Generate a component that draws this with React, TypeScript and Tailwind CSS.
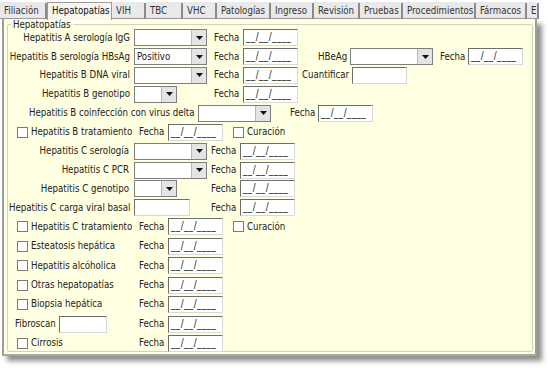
import React from 'react'

const font = { fontFamily: '"DejaVu Sans Condensed", "DejaVu Sans", Verdana, sans-serif' }

const tabs = [
  { label: 'Filiación', w: 'w-[47px]' },
  { label: 'Hepatopatías', w: 'w-[65px]', active: true },
  { label: 'VIH', w: 'w-[34px]' },
  { label: 'TBC', w: 'w-[37px]' },
  { label: 'VHC', w: 'w-[34px]' },
  { label: 'Patologías', w: 'w-[54px]' },
  { label: 'Ingreso', w: 'w-[43px]' },
  { label: 'Revisión', w: 'w-[46px]' },
  { label: 'Pruebas', w: 'w-[43px]' },
  { label: 'Procedimientos', w: 'w-[73px]' },
  { label: 'Fármacos', w: 'w-[51px]' },
  { label: 'E', w: 'w-[12px]' },
]

function Select({ value = '', small = false, wide = false }: { value?: string; small?: boolean; wide?: boolean }) {
  const w = small ? 'w-[43px]' : wide ? 'w-[83px]' : 'w-[73px]'
  return (
    <div className={`${w} h-[17px] flex border border-[#7f7f7f] bg-white shrink-0`}>
      <div className="flex-1 pl-[2px] leading-[15px] truncate">{value}</div>
      <div className="w-[15px] h-[15px] bg-[#e4e4e4] border-l border-[#b8b8b8] flex items-center justify-center">
        <svg width="7" height="4" viewBox="0 0 7 4">
          <polygon points="0,0 7,0 3.5,4" fill="#111" />
        </svg>
      </div>
    </div>
  )
}

function DateBox() {
  return (
    <div className="w-[55px] h-[17px] shrink-0 bg-white border border-t-[#6e6e6e] border-l-[#6e6e6e] border-r-[#d8d8d8] border-b-[#d8d8d8] pl-[2px] leading-[14px] tracking-[0.5px] whitespace-pre">
      __/__/____
    </div>
  )
}

function TextBox({ w }: { w: string }) {
  return <div className={`${w} h-[17px] shrink-0 bg-white border border-t-[#6e6e6e] border-l-[#6e6e6e] border-r-[#d8d8d8] border-b-[#d8d8d8]`} />
}

function Check() {
  return <div className="w-[11px] h-[11px] shrink-0 bg-white border border-[#7a7a7a]" />
}

function Row({ children, h = 'h-[18.8px]' }: { children: React.ReactNode; h?: string }) {
  return <div className={`flex items-center ${h}`}>{children}</div>
}

function Label({ children, w = 'w-[121px]' }: { children: React.ReactNode; w?: string }) {
  return <div className={`${w} shrink-0 text-right whitespace-nowrap`}>{children}</div>
}

function Fecha() {
  return (
    <>
      <span className="w-[29px] shrink-0">Fecha</span>
      <DateBox />
    </>
  )
}

function CheckRow({ label, curacion = false, children }: { label?: string; curacion?: boolean; children?: React.ReactNode }) {
  return (
    <Row h="h-[19.45px]">
      <div className="w-[130px] shrink-0 flex items-center">
        {children ?? (
          <>
            <div className="ml-[8px]"><Check /></div>
            <span className="ml-[3px] whitespace-nowrap">{label}</span>
          </>
        )}
      </div>
      <Fecha />
      {curacion && (
        <>
          <div className="ml-[10px]"><Check /></div>
          <span className="ml-[3px]">Curación</span>
        </>
      )}
    </Row>
  )
}

export default function App() {
  return (
    <div className="w-[548px] h-[368px] bg-white text-[9.6px] text-[#222]" style={font}>
      <div className="w-[537px] pt-[2px]">
        {/* Tabs */}
        <div className="flex h-[17px] bg-[#e9e9e9] border-b border-[#9a9a9a]">
          {tabs.map((t) => (
            <div
              key={t.label}
              className={`${t.w} shrink-0 pl-[4px] leading-[16px] whitespace-nowrap overflow-hidden ${
                t.active ? 'bg-[#f7f7ef] border-x border-t border-[#9a9a9a] -mb-px h-[18px] text-[#111]' : 'border-r-2 border-[#8a8a8a] h-[16px] mt-[1px] text-[#333]'
              }`}
            >
              {t.label}
            </div>
          ))}
        </div>

        {/* Panel */}
        <div className="ml-[2px] h-[337px] bg-[#ffffe2] border-l-2 border-b-2 border-r-2 border-l-[#9f9f9f] border-r-[#9f9f9f] border-b-[#a8a8a0] shadow-[5px_5px_5px_rgba(0,0,0,0.45)] pl-[3px] pr-[2px]">
          <fieldset className="border border-[#d2d2c4] rounded-[2px] h-[333px] pl-px">
            <legend className="ml-[2px] px-[2px] leading-[11px]">Hepatopatías</legend>
            <div className="-mt-[1.5px]">
              <Row>
                <Label>Hepatitis A serología IgG</Label>
                <div className="ml-[4px] w-[80px] shrink-0"><Select /></div>
                <Fecha />
              </Row>
              <Row>
                <Label>Hepatitis B serología HBsAg</Label>
                <div className="ml-[4px] w-[80px] shrink-0"><Select value="Positivo" /></div>
                <Fecha />
                <span className="ml-[20px] w-[32px] shrink-0">HBeAg</span>
                <Select wide />
                <span className="ml-[7px] w-[28px] shrink-0">Fecha</span>
                <DateBox />
              </Row>
              <Row>
                <Label>Hepatitis B DNA viral</Label>
                <div className="ml-[4px] w-[80px] shrink-0"><Select /></div>
                <Fecha />
                <span className="ml-[4px] w-[50px] shrink-0">Cuantificar</span>
                <TextBox w="w-[55px]" />
              </Row>
              <Row>
                <Label>Hepatitis B genotipo</Label>
                <div className="ml-[4px] w-[80px] shrink-0"><Select small /></div>
                <Fecha />
              </Row>
              <Row>
                <span className="ml-[20px] w-[169px] shrink-0 whitespace-nowrap">Hepatitis B coinfección con virus delta</span>
                <Select />
                <span className="ml-[19px] w-[28px] shrink-0">Fecha</span>
                <DateBox />
              </Row>
              <CheckRow label="Hepatitis B tratamiento" curacion />
              <Row>
                <Label w="w-[120px]">Hepatitis C serología</Label>
                <div className="ml-[5px] w-[77px] shrink-0"><Select /></div>
                <Fecha />
              </Row>
              <Row>
                <Label w="w-[120px]">Hepatitis C PCR</Label>
                <div className="ml-[5px] w-[77px] shrink-0"><Select /></div>
                <Fecha />
              </Row>
              <Row>
                <Label w="w-[120px]">Hepatitis C genotipo</Label>
                <div className="ml-[5px] w-[77px] shrink-0"><Select small /></div>
                <Fecha />
              </Row>
              <Row>
                <Label w="w-[121px]">Hepatitis C carga viral basal</Label>
                <div className="ml-[4px] w-[77px] shrink-0"><TextBox w="w-[56px]" /></div>
                <Fecha />
              </Row>
              <CheckRow label="Hepatitis C tratamiento" curacion />
              <CheckRow label="Esteatosis hepática" />
              <CheckRow label="Hepatitis alcóholica" />
              <CheckRow label="Otras hepatopatías" />
              <CheckRow label="Biopsia hepática" />
              <CheckRow>
                <span className="ml-[6px] w-[44px] shrink-0">Fibroscan</span>
                <TextBox w="w-[48px]" />
              </CheckRow>
              <CheckRow label="Cirrosis" />
            </div>
          </fieldset>
        </div>
      </div>
    </div>
  )
}
